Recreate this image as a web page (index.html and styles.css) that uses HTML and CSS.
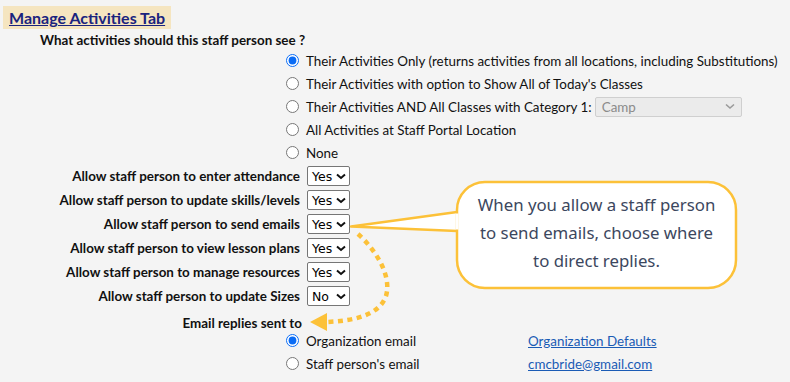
FILE: index.html
```html
<!DOCTYPE html>
<html>
<head>
<meta charset="utf-8">
<link rel="stylesheet" href="styles.css">
</head>
<body>
<div class="page">
  <div class="title-wrap"><a class="title" href="#">Manage Activities Tab</a></div>
  <div class="question">What activities should this staff person see ?</div>
  <div class="radios">
    <label class="radio-row"><input type="radio" name="act" checked><span>Their Activities Only (returns activities from all locations, including Substitutions)</span></label>
    <label class="radio-row"><input type="radio" name="act"><span>Their Activities with option to Show All of Today's Classes</span></label>
    <label class="radio-row"><input type="radio" name="act"><span>Their Activities AND All Classes with Category 1:</span><span class="sel sel-disabled">Camp<svg class="chev" width="10" height="7" viewBox="0 0 10 7"><path d="M1 1.5 L5 5 L9 1.5" fill="none" stroke="#9a9a9a" stroke-width="1.6"/></svg></span></label>
    <label class="radio-row"><input type="radio" name="act"><span>All Activities at Staff Portal Location</span></label>
    <label class="radio-row"><input type="radio" name="act"><span>None</span></label>
  </div>
  <div class="settings">
    <div class="lbl">Allow staff person to enter attendance</div><div class="sel">Yes<svg class="chev" width="10" height="7" viewBox="0 0 10 7"><path d="M1 1.5 L5 5 L9 1.5" fill="none" stroke="#111" stroke-width="2"/></svg></div>
    <div class="lbl">Allow staff person to update skills/levels</div><div class="sel">Yes<svg class="chev" width="10" height="7" viewBox="0 0 10 7"><path d="M1 1.5 L5 5 L9 1.5" fill="none" stroke="#111" stroke-width="2"/></svg></div>
    <div class="lbl">Allow staff person to send emails</div><div class="sel">Yes<svg class="chev" width="10" height="7" viewBox="0 0 10 7"><path d="M1 1.5 L5 5 L9 1.5" fill="none" stroke="#111" stroke-width="2"/></svg></div>
    <div class="lbl">Allow staff person to view lesson plans</div><div class="sel">Yes<svg class="chev" width="10" height="7" viewBox="0 0 10 7"><path d="M1 1.5 L5 5 L9 1.5" fill="none" stroke="#111" stroke-width="2"/></svg></div>
    <div class="lbl">Allow staff person to manage resources</div><div class="sel">Yes<svg class="chev" width="10" height="7" viewBox="0 0 10 7"><path d="M1 1.5 L5 5 L9 1.5" fill="none" stroke="#111" stroke-width="2"/></svg></div>
    <div class="lbl">Allow staff person to update Sizes</div><div class="sel">No<svg class="chev" width="10" height="7" viewBox="0 0 10 7"><path d="M1 1.5 L5 5 L9 1.5" fill="none" stroke="#111" stroke-width="2"/></svg></div>
  </div>
  <div class="email-lbl">Email replies sent to</div>
  <div class="email-grid">
    <label class="radio-row"><input type="radio" name="em" checked><span>Organization email</span></label>
    <a class="link" href="#">Organization Defaults</a>
    <label class="radio-row"><input type="radio" name="em"><span>Staff person's email</span></label>
    <a class="link" href="#">cmcbride@gmail.com</a>
  </div>

  <svg class="overlay" width="790" height="382" viewBox="0 0 790 382">
    <path d="M457 212 L351 226.5 L457 231" fill="#fff" stroke="#fcc138" stroke-width="2.5" stroke-linejoin="round"/>
    <rect x="457" y="182" width="279" height="106" rx="28" ry="28" fill="#fff" stroke="#fcc138" stroke-width="2.5"/>
    <path d="M457 213.5 L457 229.5" stroke="#fff" stroke-width="3"/>
    <path d="M358 234 C376 250 392 276 386 296 C379 316 352 321 326 322" fill="none" stroke="#fcc138" stroke-width="4.5" stroke-dasharray="5 4.5"/>
    <path d="M310 322 L327 313 L327 331 Z" fill="#fcc138"/>
  </svg>
  <div class="callout">When you allow a staff person<br>to send emails, choose where<br>to direct replies.</div>
</div>
</body>
</html>
```
FILE: styles.css
```css
html, body {
  margin: 0;
  padding: 0;
  background: #f4f4f4;
}
body {
  font-family: Lato, "Open Sans", sans-serif;
  font-size: 13.4px;
  color: #111;
  width: 790px;
  height: 382px;
  overflow: hidden;
}
.page {
  position: relative;
  width: 790px;
  height: 382px;
}
.title-wrap {
  display: inline-block;
  margin: 6px 0 0 3px;
  padding: 2px 6px 2px 6px;
  background: #f5e5c0;
  height: 19px;
}
.title {
  font-size: 16px;
  font-weight: bold;
  color: #1a237e;
  text-decoration: underline;
  line-height: 19px;
}
.question {
  font-weight: bold;
  padding-left: 40px;
  margin-top: 2px;
  height: 18px;
  line-height: 18px;
}
.radios {
  padding-left: 286px;
  display: flex;
  flex-direction: column;
}
.radio-row {
  display: flex;
  align-items: center;
  height: 23px;
  white-space: nowrap;
}
.radio-row input {
  margin: 0 7px 0 0;
  width: 13px;
  height: 13px;
  accent-color: #0a6cf5;
}
.sel {
  box-sizing: border-box;
  display: flex;
  align-items: center;
  justify-content: space-between;
  width: 43px;
  height: 20px;
  border: 1px solid #767676;
  border-radius: 2px;
  background: #fff;
  padding: 0 3px 0 4px;
  font-family: "DejaVu Sans", sans-serif;
  font-size: 12.5px;
  color: #000;
}
.sel-disabled {
  width: 147px;
  height: 20px;
  margin-left: 3px;
  background: #ebebeb;
  border-color: #cfcfcf;
  color: #8a8a8a;
  font-family: Lato, sans-serif;
  font-size: 13.4px;
  padding: 0 6px 0 6px;
}
.settings {
  margin-top: 2px;
  display: grid;
  grid-template-columns: 300px 43px;
  column-gap: 7px;
  row-gap: 4px;
  align-items: center;
}
.lbl {
  font-weight: bold;
  text-align: right;
  white-space: nowrap;
}
.email-lbl {
  font-weight: bold;
  width: 302px;
  text-align: right;
  margin-top: 8px;
  height: 18px;
  line-height: 18px;
}
.email-grid {
  margin-top: -3px;
  padding-left: 286px;
  display: grid;
  grid-template-columns: 242px auto;
  align-items: center;
}
.link {
  color: #1a5bb5;
  text-decoration: underline;
}
.overlay {
  position: absolute;
  left: 0;
  top: 0;
  pointer-events: none;
}
.callout {
  position: absolute;
  left: 458px;
  top: 191px;
  width: 277px;
  text-align: center;
  font-family: "Noto Sans", sans-serif;
  font-size: 16.8px;
  line-height: 28px;
  color: #3c475e;
}
```
